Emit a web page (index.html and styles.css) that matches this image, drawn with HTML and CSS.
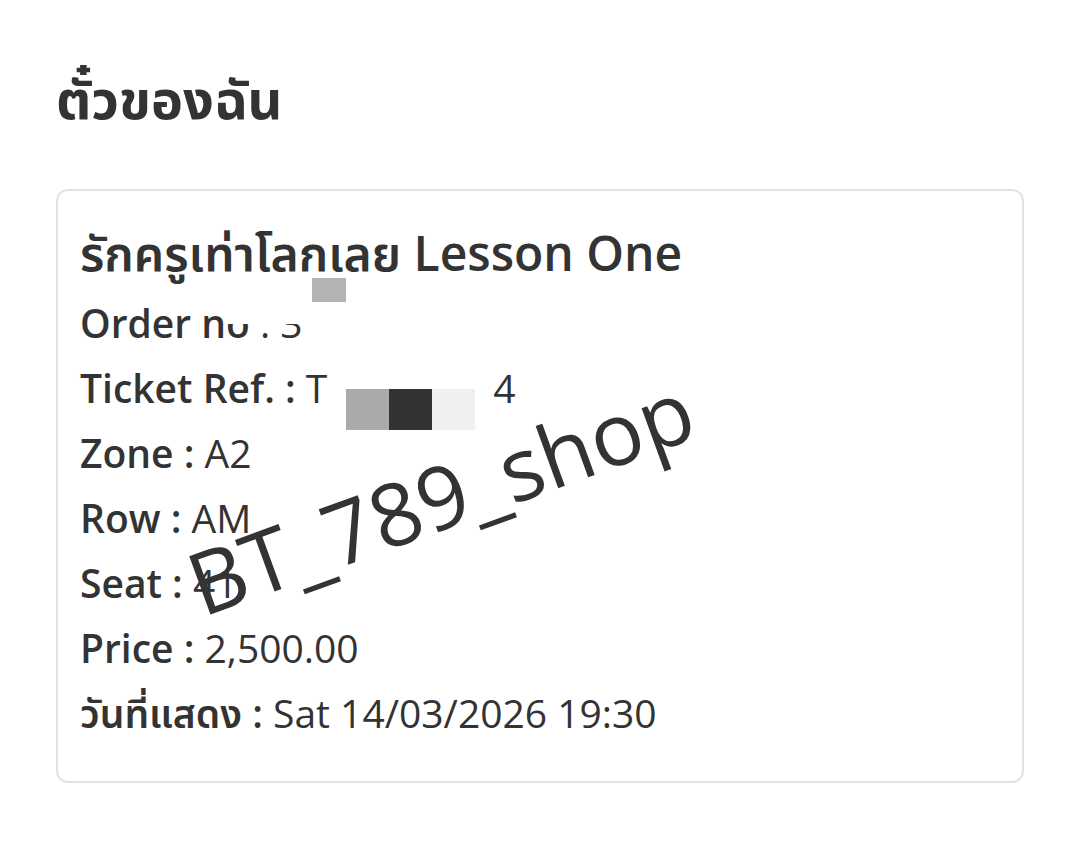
FILE: index.html
```html
<!DOCTYPE html>
<html lang="th">
<head>
<meta charset="utf-8">
<title>ตั๋วของฉัน</title>
<link rel="stylesheet" href="styles.css">
</head>
<body>
<main class="page">
  <h1 class="page-title">ตั๋วของฉัน</h1>
  <section class="card">
    <h2 class="event-title">รักครูเท่าโลกเลย Lesson One</h2>
    <div class="row"><span class="label">Order no</span> <span class="value">: 3</span></div>
    <div class="row"><span class="label">Ticket Ref. :</span> <span class="value">T<span class="gap"></span>4</span></div>
    <div class="row"><span class="label">Zone :</span> <span class="value">A2</span></div>
    <div class="row"><span class="label">Row :</span> <span class="value">AM</span></div>
    <div class="row"><span class="label">Seat :</span> <span class="value">41</span></div>
    <div class="row"><span class="label">Price :</span> <span class="value">2,500.00</span></div>
    <div class="row"><span class="label">วันที่แสดง :</span> <span class="value">Sat 14/03/2026 19:30</span></div>
  </section>
  <div class="redact r1"></div>
  <div class="redact r2"></div>
  <div class="redact r3"></div>
  <div class="redact r4"></div>
  <div class="redact r5"></div>
  <div class="watermark">BT_789_shop</div>
</main>
</body>
</html>
```
FILE: styles.css
```css
html, body {
  margin: 0;
  padding: 0;
  background: #ffffff;
}
body {
  font-family: "Open Sans", "Noto Sans", "Noto Sans Thai", sans-serif;
  color: #333333;
}
.page {
  position: relative;
  width: 1080px;
  height: 856px;
  padding: 62px 56px 0 56px;
  box-sizing: border-box;
}
.page-title {
  margin: 0;
  font-size: 54px;
  font-weight: 700;
  line-height: 72px;
  padding-left: 0;
}
.card {
  margin-top: 55px;
  width: 968px;
  box-sizing: border-box;
  border: 2px solid #e2e2e2;
  border-radius: 12px;
  padding: 30px 22px 36px 22px;
}
.event-title {
  margin: 0 0 5px 0;
  font-size: 48px;
  font-weight: 600;
  line-height: 64px;
}
.row {
  font-size: 39px;
  line-height: 65px;
  white-space: nowrap;
}
.label {
  font-weight: 600;
}
.value {
  font-weight: 400;
}
.gap {
  display: inline-block;
  width: 166px;
}
.redact {
  position: absolute;
}
.r1 { left: 312px; top: 278px; width: 34px; height: 24px; background: #b3b3b3; }
.r2 { left: 228px; top: 300px; width: 80px; height: 24px; background: #ffffff; }
.r3 { left: 346px; top: 389px; width: 43px; height: 41px; background: #aaaaaa; }
.r4 { left: 389px; top: 389px; width: 43px; height: 41px; background: #333333; }
.r5 { left: 432px; top: 389px; width: 43px; height: 41px; background: #f0f0f0; }
.watermark {
  position: absolute;
  left: 206px;
  top: 540px;
  font-size: 87px;
  font-weight: 400;
  line-height: 1;
  color: #333333;
  transform: rotate(-20deg);
  transform-origin: 0 100%;
}
```
